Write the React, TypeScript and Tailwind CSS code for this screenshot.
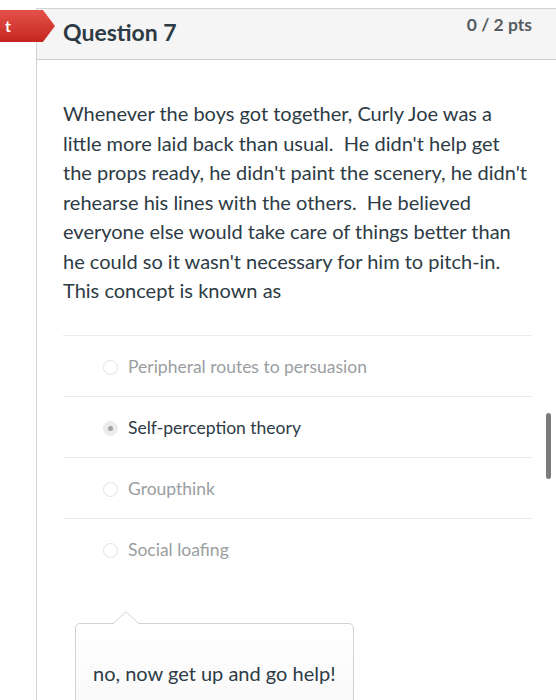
const answers = [
  { label: "Peripheral routes to persuasion", selected: false },
  { label: "Self-perception theory", selected: true },
  { label: "Groupthink", selected: false },
  { label: "Social loafing", selected: false },
];

function Radio({ selected }: { selected: boolean }) {
  if (selected) {
    return (
      <span className="flex h-[15px] w-[15px] items-center justify-center rounded-full bg-[#ebebeb]">
        <span className="h-[5px] w-[5px] rounded-full bg-[#a3a3a3]" />
      </span>
    );
  }
  return <span className="h-[15px] w-[15px] rounded-full border border-[#e2e2e2] bg-white" />;
}

export default function App() {
  return (
    <div className="relative h-[700px] w-[556px] overflow-hidden bg-white font-[Lato,sans-serif] text-[#2d3b45]">
      <div className="ml-[36px] mt-[8px] w-[522px] border-l border-t border-[#d0d4d7]">
        <header className="flex h-[51px] items-start justify-between border-b border-[#c9ced1] bg-[#f5f5f5] pl-[26px] pr-[26px]">
          <h2 className="mt-[9px] text-[23px] font-bold leading-[28px] text-[#2d3b45]">Question 7</h2>
          <div className="mt-[3px] text-[17.5px] font-bold text-[#555c61]">0 / 2 pts</div>
        </header>

        <div className="px-[26px] pt-[39px]">
          <p className="text-[20px] leading-[29.5px]">
            Whenever the boys got together, Curly Joe was a little more laid back than usual.&nbsp; He didn't help get
            the props ready, he didn't paint the scenery, he didn't rehearse his lines with the others.&nbsp; He believed
            everyone else would take care of things better than he could so it wasn't necessary for him to pitch-in.
            This concept is known as
          </p>

          <div className="mt-[29px]">
            {answers.map((a) => (
              <div key={a.label} className="flex h-[61px] items-center border-t border-[#e8eaeb] pl-[40px] pt-[4px]">
                <Radio selected={a.selected} />
                <span
                  className={
                    a.selected
                      ? "ml-[10px] text-[17.5px] text-[#2d3b45]"
                      : "ml-[10px] text-[17.5px] text-[#9a9ea1]"
                  }
                >
                  {a.label}
                </span>
              </div>
            ))}
          </div>

          <div className="relative ml-[12px] mt-[44px] w-[279px]">
            <svg className="absolute left-[38px] top-[-12px]" width="26" height="13" viewBox="0 0 26 13">
              <path d="M0 12.5 L13 0.8 L26 12.5" fill="#ffffff" stroke="#cfd3d6" strokeWidth="1" />
            </svg>
            <div className="h-[110px] rounded-[5px] border border-[#cfd3d6] bg-gradient-to-b from-white to-[#f7f7f7] px-[17px] pt-[35px]">
              <p className="text-[20px] leading-[28px] text-[#2d3b45]">no, now get up and go help!</p>
            </div>
            <div className="absolute left-[39px] top-0 h-[2px] w-[24px] bg-white" />
          </div>
        </div>
      </div>

      <div className="absolute left-0 top-[10px] flex h-[32px] w-[55px] items-center bg-gradient-to-b from-[#e5514a] to-[#c4241e] pl-[5px] [clip-path:polygon(0_0,78%_0,100%_50%,78%_100%,0_100%)]">
        <span className="text-[16px] font-bold leading-none text-white">t</span>
      </div>

      <div className="absolute left-[546px] top-[413px] h-[66px] w-[5px] rounded-full bg-[#7b7b7b]" />
    </div>
  );
}
